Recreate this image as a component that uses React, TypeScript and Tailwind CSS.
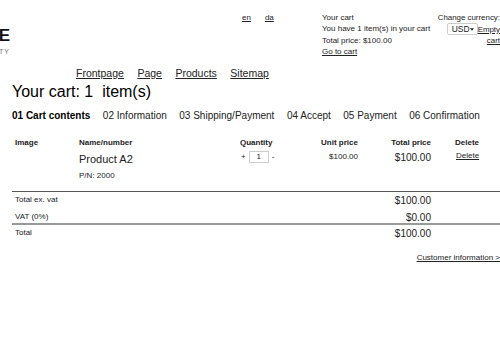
import React from "react";

const steps = [
  "01 Cart contents",
  "02 Information",
  "03 Shipping/Payment",
  "04 Accept",
  "05 Payment",
  "06 Confirmation",
];

const nav = ["Frontpage", "Page", "Products", "Sitemap"];

export default function App() {
  return (
    <div className="w-[500px] h-[346px] overflow-hidden bg-white text-[#222] font-['Liberation_Sans',Arial,sans-serif]">
      {/* Header */}
      <div className="flex h-[64px]">
        <div className="w-[10px] shrink-0 flex flex-col items-end pt-[27px] whitespace-nowrap">
          <div className="text-[17px] leading-[17px] font-bold text-[#111]">WEBSTORE</div>
          <div className="text-[7px] leading-[9px] tracking-[1px] text-[#777] mt-[3px]">QUALITY</div>
        </div>
        <div className="ml-[232px] w-[80px] shrink-0 pt-[12px] flex gap-[14px] text-[8px] leading-[11.4px]">
          <a className="underline">en</a>
          <a className="underline">da</a>
        </div>
        <div className="w-[116px] shrink-0 pt-[12px] text-[8px] leading-[11.4px] whitespace-nowrap">
          <div>Your cart</div>
          <div>You have 1 item(s) in your cart</div>
          <div>Total price: $100.00</div>
          <a className="underline">Go to cart</a>
        </div>
        <div className="w-[62px] shrink-0 pt-[12px] text-[7.9px] leading-[11.4px] whitespace-nowrap flex flex-col items-end">
          <div>Change currency:</div>
          <div className="flex items-center">
            <div className="flex items-center justify-between h-[12px] w-[31px] border border-[#ccc] rounded-[2px] pl-[4px] pr-[3px] text-[8.5px] overflow-hidden">
              <span>USD</span>
              <svg width="5" height="3" viewBox="0 0 5 3">
                <path d="M0 0h5L2.5 3z" fill="#222" />
              </svg>
            </div>
            <a className="underline">Empty</a>
          </div>
          <a className="underline">cart</a>
        </div>
      </div>

      {/* Navigation */}
      <div className="mt-[2px] pl-[76px] flex gap-[13.5px] text-[10.5px] leading-[14px]">
        {nav.map((n) => (
          <a key={n} className="underline">
            {n}
          </a>
        ))}
      </div>

      <h1 className="mt-[3px] pl-[12px] text-[16px] leading-[18px] text-black">
        Your cart: 1&nbsp; item(s)
      </h1>

      {/* Steps */}
      <div className="mt-[9px] pl-[12px] flex gap-[12.5px] text-[10px] leading-[12px] whitespace-nowrap">
        {steps.map((s, i) => (
          <span key={s} className={i === 0 ? "font-bold text-black" : ""}>
            {s}
          </span>
        ))}
      </div>

      {/* Cart table */}
      <div className="ml-[12px] mt-[16px] grid grid-cols-[64px_161px_63px_61px_73px_1fr] text-[8px] leading-[10px] font-bold">
        <div className="pl-[3px]">Image</div>
        <div className="pl-[3px]">Name/number</div>
        <div className="pl-[3px]">Quantity</div>
        <div className="text-right pr-[3px]">Unit price</div>
        <div className="text-right pr-[3px]">Total price</div>
        <div className="pl-[21px]">Delete</div>
      </div>

      <div className="ml-[12px] grid grid-cols-[64px_161px_63px_61px_73px_1fr] items-start">
        <div />
        <div className="pl-[3px] pt-[4.5px]">
          <div className="text-[11px] leading-[13px]">Product A2</div>
          <div className="mt-[5.5px] text-[8px] leading-[10px]">P/N: 2000</div>
        </div>
        <div className="pl-[4px] pt-[3px] flex items-center gap-[3px] text-[8px]">
          <span>+</span>
          <div className="h-[12px] w-[20px] border border-[#ccc] text-center leading-[10px]">1</div>
          <span>-</span>
        </div>
        <div className="pt-[4px] text-right pr-[3px] text-[8px] leading-[10px]">$100.00</div>
        <div className="pt-[4px] text-right pr-[3px] text-[10px] leading-[12px]">$100.00</div>
        <div className="pt-[3px] pl-[22px] text-[8px] leading-[10px]">
          <a className="underline">Delete</a>
        </div>
      </div>

      {/* Totals */}
      <div className="ml-[12px] mt-[10px] h-[1px] bg-[#555]" />
      <div className="ml-[12px] h-[16px] grid grid-cols-[349px_73px_1fr] items-center">
        <div className="pl-[3px] text-[8px]">Total ex. vat</div>
        <div className="text-right pr-[3px] text-[10px]">$100.00</div>
      </div>
      <div className="ml-[12px] h-[15px] grid grid-cols-[349px_73px_1fr] items-center">
        <div className="pl-[3px] text-[8px]">VAT (0%)</div>
        <div className="text-right pr-[3px] text-[10px] pt-[2px]">$0.00</div>
      </div>
      <div className="ml-[12px] h-[2px] bg-[#999]" />
      <div className="ml-[12px] h-[13px] grid grid-cols-[349px_73px_1fr] items-center">
        <div className="pl-[3px] text-[8px]">Total</div>
        <div className="text-right pr-[3px] text-[10px] pt-[1px]">$100.00</div>
      </div>

      <div className="mt-[15px] flex justify-end text-[8px] leading-[10px]">
        <a className="underline whitespace-nowrap">Customer information &gt;</a>
      </div>
    </div>
  );
}
